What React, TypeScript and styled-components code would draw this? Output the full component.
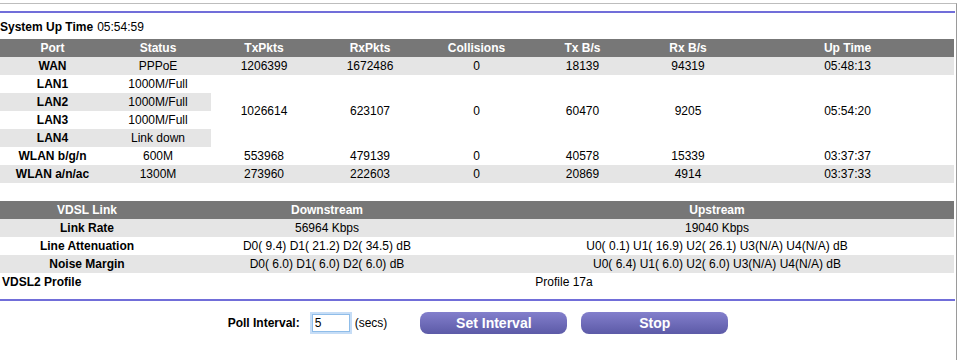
import React from "react";
import styled, {createGlobalStyle} from "styled-components";

const GlobalStyle = createGlobalStyle`
  body {
    margin: 0;
    background: #fff;
    font-family: "Liberation Sans", Arial, sans-serif;
    font-size: 12px;
    color: #000;
  }
`;

const Frame = styled.div`
  width: 957px;
  height: 360px;
  box-sizing: border-box;
  margin-top: 3px;
  border-top: 1px solid #bdbdbd;
  border-right: 1px solid #9a9a9a;
  padding-top: 7px;
`;

const Rule = styled.div`
  width: 955px;
  height: 2px;
  background: #716ed9;
`;

const UpTime = styled.div`
  height: 26px;
  display: flex;
  align-items: center;
  padding-top: 1px;
  box-sizing: border-box;
  b {
    margin-right: 4px;
  }
`;

const Table = styled.table<{ $gap?: number }>`
  width: 954px;
  border-collapse: collapse;
  table-layout: fixed;
  margin-top: ${p => p.$gap ?? 0}px;
`;

const Head = styled.th<{ $align?: string }>`
  height: 18px;
  padding: 0;
  background: #777;
  color: #fff;
  font-weight: bold;
  text-align: ${p => p.$align ?? "center"};
`;

const Cell = styled.td<{ $shade?: boolean; $bold?: boolean; $align?: string }>`
  height: 18px;
  padding: 0 ${p => (p.$align === "left" ? "2px" : "0")};
  background: ${p => (p.$shade ? "#e5e5e5" : "#fff")};
  font-weight: ${p => (p.$bold ? "bold" : "normal")};
  text-align: ${p => p.$align ?? "center"};
  vertical-align: middle;
  white-space: nowrap;
`;

const Controls = styled.div`
  display: flex;
  align-items: center;
  justify-content: center;
  margin-top: 11px;
  height: 22px;
`;

const Label = styled.span`
  font-weight: bold;
  margin-right: 12px;
`;

const IntervalInput = styled.input`
  width: 38px;
  height: 18px;
  box-sizing: border-box;
  padding: 0 2px;
  border: 1px solid #8fbde9;
  box-shadow: 0 0 0 2px #c6ddf6;
  outline: none;
  font-family: "Liberation Sans", Arial, sans-serif;
  font-size: 12px;
  margin-right: 5px;
`;

const Unit = styled.span`
  margin-right: 33px;
`;

const PurpleButton = styled.button`
  width: 147px;
  height: 22px;
  border: none;
  border-radius: 8px;
  background: linear-gradient(#837fcc, #5c5aa7);
  color: #fff;
  font-family: "Liberation Sans", Arial, sans-serif;
  font-size: 14px;
  font-weight: bold;
  padding: 0;
  & + & {
    margin-left: 14px;
  }
`;

type PortRow = { port: string; status: string; shade: boolean; stats?: string[]; span?: number };

const ports: PortRow[] = [
  {port: "WAN", status: "PPPoE", shade: true, stats: ["1206399", "1672486", "0", "18139", "94319", "05:48:13"]},
  {port: "LAN1", status: "1000M/Full", shade: false, stats: ["1026614", "623107", "0", "60470", "9205", "05:54:20"], span: 4},
  {port: "LAN2", status: "1000M/Full", shade: true},
  {port: "LAN3", status: "1000M/Full", shade: false},
  {port: "LAN4", status: "Link down", shade: true},
  {port: "WLAN b/g/n", status: "600M", shade: false, stats: ["553968", "479139", "0", "40578", "15339", "03:37:37"]},
  {port: "WLAN a/n/ac", status: "1300M", shade: true, stats: ["273960", "222603", "0", "20869", "4914", "03:37:33"]},
];

const portWidths = [105, 106, 106, 106, 107, 105, 106, 213];
const portHeads = ["Port", "Status", "TxPkts", "RxPkts", "Collisions", "Tx B/s", "Rx B/s", "Up Time"];

const vdsl = [
  {name: "Link Rate", down: "56964 Kbps", up: "19040 Kbps", shade: true},
  {name: "Line Attenuation", down: "D0( 9.4) D1( 21.2) D2( 34.5) dB", up: "U0( 0.1) U1( 16.9) U2( 26.1) U3(N/A) U4(N/A) dB", shade: false},
  {name: "Noise Margin", down: "D0( 6.0) D1( 6.0) D2( 6.0) dB", up: "U0( 6.4) U1( 6.0) U2( 6.0) U3(N/A) U4(N/A) dB", shade: true},
];

const PortTable = () => (
  <Table>
    <colgroup>
      {portWidths.map((w, i) => <col key={`c-${i}`} style={{width: w}}/>)}
    </colgroup>
    <thead>
      <tr>{portHeads.map(h => <Head key={h}>{h}</Head>)}</tr>
    </thead>
    <tbody>
      {ports.map(row => (
        <tr key={row.port}>
          <Cell $bold $shade={row.shade}>{row.port}</Cell>
          <Cell $shade={row.shade}>{row.status}</Cell>
          {row.stats && row.stats.map((s, i) => (
            <Cell key={`s-${i}`} rowSpan={row.span} $shade={!row.span && row.shade}>{s}</Cell>
          ))}
        </tr>
      ))}
    </tbody>
  </Table>
);

const VdslTable = () => (
  <Table $gap={18}>
    <colgroup>
      <col style={{width: 174}}/>
      <col style={{width: 306}}/>
      <col style={{width: 474}}/>
    </colgroup>
    <thead>
      <tr>
        <Head>VDSL Link</Head>
        <Head>Downstream</Head>
        <Head>Upstream</Head>
      </tr>
    </thead>
    <tbody>
      {vdsl.map(row => (
        <tr key={row.name}>
          <Cell $bold $shade={row.shade}>{row.name}</Cell>
          <Cell $shade={row.shade}>{row.down}</Cell>
          <Cell $shade={row.shade}>{row.up}</Cell>
        </tr>
      ))}
      <tr>
        <Cell $bold $align="left">VDSL2 Profile</Cell>
        <Cell colSpan={2}>Profile 17a</Cell>
      </tr>
    </tbody>
  </Table>
);

export default function App() {
  return (
    <>
      <GlobalStyle/>
      <Frame>
        <Rule/>
        <UpTime><b>System Up Time</b>05:54:59</UpTime>
        <PortTable/>
        <VdslTable/>
        <div style={{height: 8}}/>
        <Rule/>
        <Controls>
          <Label>Poll Interval:</Label>
          <IntervalInput defaultValue="5"/>
          <Unit>(secs)</Unit>
          <PurpleButton>Set Interval</PurpleButton>
          <PurpleButton>Stop</PurpleButton>
        </Controls>
      </Frame>
    </>
  );
}
